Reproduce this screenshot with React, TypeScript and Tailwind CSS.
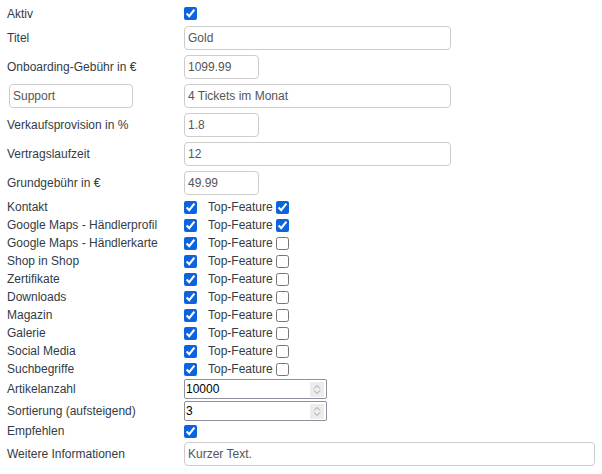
type Feature = { label: string; top: boolean };

const features: Feature[] = [
  { label: "Kontakt", top: true },
  { label: "Google Maps - Händlerprofil", top: true },
  { label: "Google Maps - Händlerkarte", top: false },
  { label: "Shop in Shop", top: false },
  { label: "Zertifikate", top: false },
  { label: "Downloads", top: false },
  { label: "Magazin", top: false },
  { label: "Galerie", top: false },
  { label: "Social Media", top: false },
  { label: "Suchbegriffe", top: false },
];

function Check({ checked }: { checked: boolean }) {
  return (
    <input
      type="checkbox"
      defaultChecked={checked}
      className="m-0 h-[13px] w-[13px] shrink-0 accent-[#0b63de]"
    />
  );
}

function TextField({ value, width }: { value: string; width: string }) {
  return (
    <input
      type="text"
      defaultValue={value}
      className={`${width} h-[24px] rounded-[4px] border border-[#cccccc] bg-white px-[3px] text-[12px] text-[#555555] outline-none`}
    />
  );
}

function NumberField({ value }: { value: string }) {
  return (
    <div className="flex h-[20px] w-[143px] items-center rounded-[2px] border border-[#8f8f9d] bg-white pl-[1px] pr-[2px]">
      <input
        type="text"
        defaultValue={value}
        className="h-full min-w-0 flex-1 bg-transparent text-[12px] text-black outline-none"
      />
      <div className="flex h-[15px] w-[14px] flex-col items-center justify-center bg-[#ececec]">
        <svg width="8" height="5" viewBox="0 0 8 5" className="mb-[1px]">
          <path d="M1 4.5 4 1.5 7 4.5" fill="none" stroke="#a0a0a0" strokeWidth="1" />
        </svg>
        <svg width="8" height="5" viewBox="0 0 8 5">
          <path d="M1 0.5 4 3.5 7 0.5" fill="none" stroke="#a0a0a0" strokeWidth="1" />
        </svg>
      </div>
    </div>
  );
}

function Row({
  label,
  h,
  children,
  className = "",
}: {
  label: React.ReactNode;
  h: string;
  children: React.ReactNode;
  className?: string;
}) {
  return (
    <div className={`flex items-center ${h} ${className}`}>
      <div className="w-[184px] shrink-0 pl-[7px]">{label}</div>
      <div className="flex items-center">{children}</div>
    </div>
  );
}

export default function App() {
  return (
    <div
      className="h-[474px] w-[602px] bg-white pt-[5px] text-[12px] text-[#333b45]"
      style={{ fontFamily: '"Liberation Sans", Arial, sans-serif' }}
    >
      <Row label="Aktiv" h="h-[17px]">
        <Check checked />
      </Row>
      <Row label="Titel" h="h-[24px]" className="mt-[4px]">
        <TextField value="Gold" width="w-[267px]" />
      </Row>
      <Row label="Onboarding-Gebühr in €" h="h-[24px]" className="mt-[5px]">
        <TextField value="1099.99" width="w-[75px]" />
      </Row>
      <Row
        label={
          <div className="ml-[2px]">
            <TextField value="Support" width="w-[124px]" />
          </div>
        }
        h="h-[24px]"
        className="mt-[5px]"
      >
        <TextField value="4 Tickets im Monat" width="w-[267px]" />
      </Row>
      <Row label="Verkaufsprovision in %" h="h-[24px]" className="mt-[5px]">
        <TextField value="1.8" width="w-[75px]" />
      </Row>
      <Row label="Vertragslaufzeit" h="h-[24px]" className="mt-[5px]">
        <TextField value="12" width="w-[267px]" />
      </Row>
      <Row label="Grundgebühr in €" h="h-[24px]" className="mt-[5px]">
        <TextField value="49.99" width="w-[75px]" />
      </Row>

      <div className="mt-[3px]">
        {features.map((f) => (
          <Row key={f.label} label={f.label} h="h-[18px]">
            <Check checked />
            <span className="ml-[11px] w-[68px]">Top-Feature</span>
            <Check checked={f.top} />
          </Row>
        ))}
      </div>

      <Row label="Artikelanzahl" h="h-[22px]">
        <NumberField value="10000" />
      </Row>
      <Row label="Sortierung (aufsteigend)" h="h-[22px]">
        <NumberField value="3" />
      </Row>
      <Row label="Empfehlen" h="h-[18px]">
        <Check checked />
      </Row>
      <Row label="Weitere Informationen" h="h-[24px]" className="mt-[2px]">
        <TextField value="Kurzer Text." width="w-[411px]" />
      </Row>
    </div>
  );
}
